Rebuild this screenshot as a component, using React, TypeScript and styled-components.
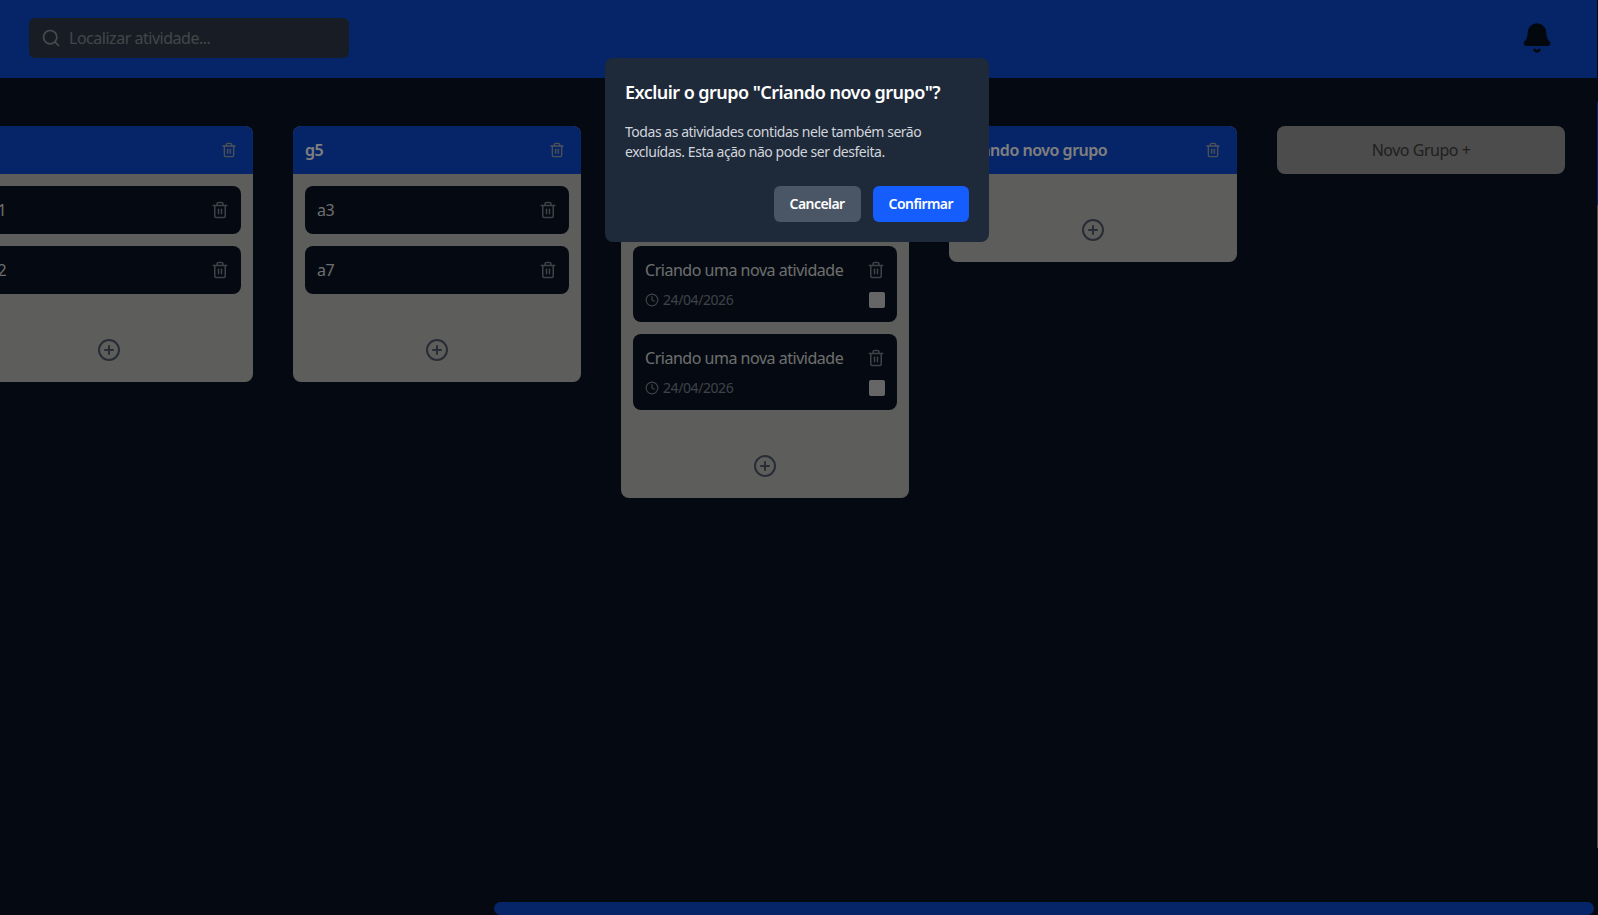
import React, { useLayoutEffect, useRef } from 'react';
import styled, { createGlobalStyle } from 'styled-components';
import { Bell, CirclePlus, Clock, Search, Trash2 } from 'lucide-react';

const GlobalStyle = createGlobalStyle`
  html, body {
    margin: 0;
    height: 100%;
    overflow: hidden;
    background: #0a1424;
  }
  * {
    box-sizing: border-box;
    font-family: "Noto Sans", "Open Sans", sans-serif;
    letter-spacing: -0.03em;
  }
`;

const Page = styled.div`
  position: relative;
  height: 100vh;
  display: flex;
  flex-direction: column;
  background: #0a1424;
`;

const Header = styled.header`
  flex: none;
  height: 78px;
  padding: 0 45px 2px 29px;
  display: flex;
  align-items: center;
  justify-content: space-between;
  background: #0c4ad0;
`;

const SearchBox = styled.label`
  width: 320px;
  height: 40px;
  padding: 0 12px;
  display: flex;
  align-items: center;
  gap: 8px;
  border-radius: 6px;
  background: #303a4a;
  color: #8f96a0;
`;

const SearchInput = styled.input`
  flex: 1;
  min-width: 0;
  border: 0;
  outline: 0;
  padding: 0;
  background: transparent;
  font-size: 16px;
  color: #fff;
  &::placeholder {
    color: #858c96;
    opacity: 1;
  }
`;

const BellIcon = styled(Bell)`
  color: #06101e;
  fill: #06101e;
`;

const Board = styled.main`
  flex: 1;
  min-height: 0;
  margin-right: 4px;
  overflow-x: auto;
  overflow-y: hidden;
  scrollbar-width: none;
`;

const Columns = styled.div`
  width: max-content;
  padding: 48px 33px 0 26px;
  display: flex;
  align-items: flex-start;
  gap: 40px;
`;

const Column = styled.section`
  width: 288px;
  flex: none;
  border-radius: 8px;
  overflow: hidden;
  background: #babab6;
`;

const ColumnHead = styled.div`
  height: 48px;
  padding: 0 16px 0 12px;
  display: flex;
  align-items: center;
  justify-content: space-between;
  background: #0c4ad0;
`;

const ColumnTitle = styled.h2`
  margin: 0;
  font-size: 16px;
  font-weight: 600;
  color: #fff;
`;

const HeadTrash = styled(Trash2)`
  color: #99a1af;
`;

const ColumnBody = styled.div`
  padding: 12px 12px 0;
`;

const Card = styled.article`
  margin-bottom: 12px;
  padding: 12px;
  display: flex;
  flex-direction: column;
  gap: 8px;
  border-radius: 8px;
  background: #0a1424;
`;

const CardRow = styled.div`
  display: flex;
  align-items: center;
  justify-content: space-between;
`;

const CardName = styled.span`
  font-size: 16px;
  line-height: 24px;
  color: #dcdcdc;
`;

const CardTrash = styled(Trash2)`
  color: #7a8290;
`;

const DueDate = styled.span`
  display: flex;
  align-items: center;
  gap: 4px;
  font-size: 14px;
  line-height: 20px;
  color: #7d848f;
`;

const Check = styled.span`
  width: 16px;
  height: 16px;
  border-radius: 2px;
  background: #cccccc;
`;

const AddRow = styled.div`
  padding: 32px 0 20px;
  display: flex;
  justify-content: center;
  color: #4f586a;
`;

const NewGroup = styled.button`
  width: 288px;
  height: 48px;
  flex: none;
  border: 0;
  border-radius: 8px;
  background: #989898;
  font-size: 16px;
  color: #404040;
`;

const ScrollThumb = styled.div`
  position: absolute;
  left: 494px;
  right: 4px;
  bottom: 0;
  height: 13px;
  border-radius: 7px;
  background: #0c4ad0;
`;

const EdgeLine = styled.div`
  position: absolute;
  top: 0;
  right: 0;
  bottom: 0;
  width: 1px;
  background: linear-gradient(
    #0a1424 102px,
    #0c4ad0 102px,
    #0c4ad0 205px,
    #989898 205px,
    #989898 848px,
    #0a1424 848px
  );
`;

const Overlay = styled.div`
  position: fixed;
  inset: 0;
  padding: 58px 4px 0 0;
  display: flex;
  justify-content: center;
  align-items: flex-start;
  background: rgba(0, 0, 0, 0.5);
`;

const Dialog = styled.div`
  width: 384px;
  padding: 20px;
  border-radius: 8px;
  background: #1e2939;
`;

const DialogTitle = styled.h3`
  margin: 0 0 16px;
  font-size: 18px;
  line-height: 28px;
  font-weight: 600;
  color: #fff;
`;

const DialogText = styled.p`
  margin: 0 0 24px;
  font-size: 14px;
  line-height: 20px;
  letter-spacing: -0.033em;
  color: #d1d5dc;
`;

const DialogActions = styled.div`
  display: flex;
  justify-content: flex-end;
  gap: 12px;
`;

const DialogButton = styled.button<{ $primary?: boolean }>`
  height: 36px;
  padding: 0 16px 2px;
  border: 0;
  border-radius: 6px;
  font-size: 14px;
  font-weight: 600;
  letter-spacing: -0.04em;
  color: #fff;
  background: ${(p) => (p.$primary ? '#155dfc' : '#4a5565')};
`;

type Activity = { name: string; date?: string };
type Group = { name: string; activities: Activity[] };

const DATE = '24/04/2026';

const GROUPS: Group[] = [
  { name: 'g1', activities: [{ name: 'a4' }] },
  { name: 'g2', activities: [{ name: 'a5' }, { name: 'a6' }] },
  { name: 'g4', activities: [{ name: 'a1' }, { name: 'a2' }] },
  { name: 'g5', activities: [{ name: 'a3' }, { name: 'a7' }] },
  {
    name: 'g6',
    activities: [
      { name: 'a8' },
      { name: 'Criando uma nova atividade', date: DATE },
      { name: 'Criando uma nova atividade', date: DATE },
    ],
  },
  { name: 'Criando novo grupo', activities: [] },
];

export default function App() {
  const boardRef = useRef<HTMLElement>(null);

  useLayoutEffect(() => {
    if (boardRef.current) boardRef.current.scrollLeft = 717;
  }, []);

  return (
    <Page>
      <GlobalStyle />
      <Header>
        <SearchBox>
          <Search size={20} />
          <SearchInput placeholder="Localizar atividade..." />
        </SearchBox>
        <BellIcon size={32} />
      </Header>
      <Board ref={boardRef}>
        <Columns>
          {GROUPS.map((group) => (
            <Column key={group.name}>
              <ColumnHead>
                <ColumnTitle>{group.name}</ColumnTitle>
                <HeadTrash size={16} />
              </ColumnHead>
              <ColumnBody>
                {group.activities.map((activity, i) => (
                  <Card key={i}>
                    <CardRow>
                      <CardName>{activity.name}</CardName>
                      <CardTrash size={18} />
                    </CardRow>
                    {activity.date && (
                      <CardRow>
                        <DueDate>
                          <Clock size={14} />
                          {activity.date}
                        </DueDate>
                        <Check />
                      </CardRow>
                    )}
                  </Card>
                ))}
                <AddRow>
                  <CirclePlus size={24} />
                </AddRow>
              </ColumnBody>
            </Column>
          ))}
          <NewGroup>Novo Grupo +</NewGroup>
        </Columns>
      </Board>
      <ScrollThumb />
      <EdgeLine />
      <Overlay>
        <Dialog>
          <DialogTitle>Excluir o grupo "Criando novo grupo"?</DialogTitle>
          <DialogText>
            Todas as atividades contidas nele também serão excluídas. Esta ação não pode ser desfeita.
          </DialogText>
          <DialogActions>
            <DialogButton>Cancelar</DialogButton>
            <DialogButton $primary>Confirmar</DialogButton>
          </DialogActions>
        </Dialog>
      </Overlay>
    </Page>
  );
}
